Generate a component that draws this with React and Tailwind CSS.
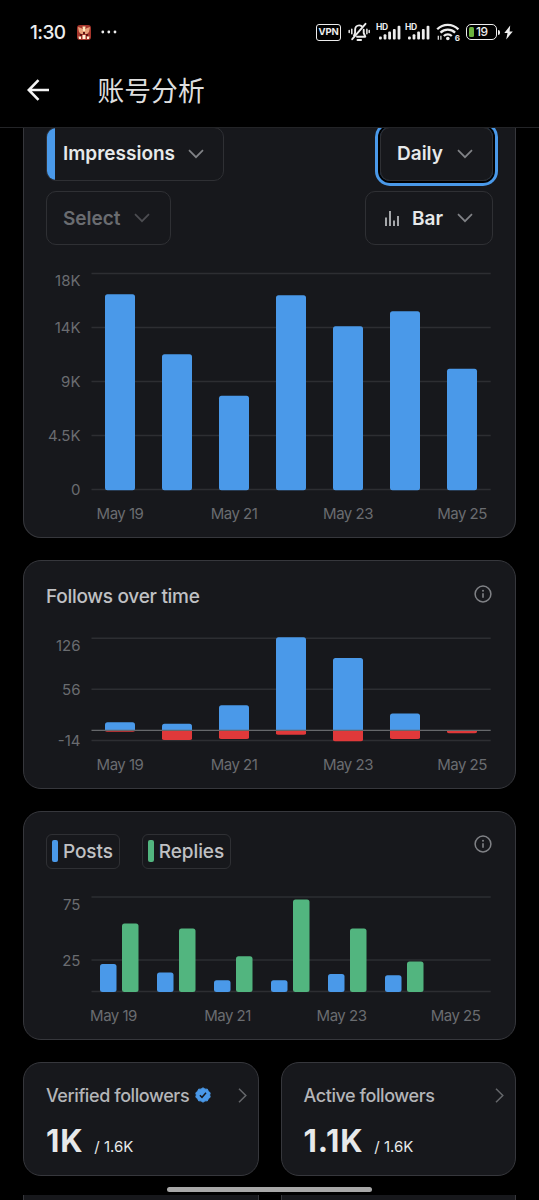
import React from "react";

const DAYS = ["May 19", "May 21", "May 23", "May 25"];

const impressions = [196, 136, 94.5, 195, 164, 179, 121.5];

const follows = [
    { up: 8, down: 1.5 },
    { up: 6.5, down: 9.7 },
    { up: 25, down: 8.8 },
    { up: 93, down: 4.5 },
    { up: 72.3, down: 11 },
    { up: 16.8, down: 8.8 },
    { up: 0, down: 3 },
];

const activity = [
    { posts: 28, replies: 68.5 },
    { posts: 19.5, replies: 63.5 },
    { posts: 11.8, replies: 35.8 },
    { posts: 11.8, replies: 92.5 },
    { posts: 18, replies: 63.5 },
    { posts: 16.8, replies: 30.5 },
];

function Chevron({ className = "" }) {
    return (
        <svg width="16" height="10" viewBox="0 0 16 10" fill="none" className={className}>
            <path d="M1 1.2l7 7 7-7" stroke="currentColor" strokeWidth="1.7" />
        </svg>
    );
}

function ChevronRight() {
    return (
        <svg width="9" height="15" viewBox="0 0 9 15" fill="none" className="text-[#65676b]">
            <path d="M1 .8l6.8 6.7L1 14.2" stroke="currentColor" strokeWidth="1.5" />
        </svg>
    );
}

function InfoIcon() {
    return (
        <svg width="18" height="18" viewBox="0 0 18 18" fill="none" className="text-[#808286]">
            <circle cx="9" cy="9" r="7.9" stroke="currentColor" strokeWidth="1.5" />
            <path d="M9 8.2v4.6" stroke="currentColor" strokeWidth="1.6" />
            <circle cx="9" cy="5.7" r="1" fill="currentColor" />
        </svg>
    );
}

function Grid({ lines }) {
    return lines.map((y) => (
        <line key={y} x1="45.5" x2="444.7" y1={y} y2={y} stroke="#2d2e32" strokeWidth="1.4" />
    ));
}

function YLabels({ items }) {
    return items.map(([text, y]) => (
        <text key={text} x="34.5" y={y} textAnchor="end">
            {text}
        </text>
    ));
}

function XLabels({ start, y }) {
    return DAYS.map((day, i) => (
        <text key={day} x={start + i * 114} y={y} textAnchor="middle" className="tracking-[-0.5px]">
            {day}
        </text>
    ));
}

function Chart({ height, children }) {
    return (
        <svg
            width="447"
            height={height}
            viewBox={`0 0 447 ${height}`}
            className="block fill-[#6a6c70] text-[15px]"
        >
            {children}
        </svg>
    );
}

function Signal() {
    return (
        <div className="relative h-[18px] w-[25px]">
            <span className="absolute top-0 left-0 text-[8.5px] leading-[8px] font-bold tracking-[-0.4px]">HD</span>
            <svg width="25" height="18" viewBox="0 0 25 18" fill="currentColor">
                <rect x="3" y="13.5" width="2.8" height="3" rx="1" />
                <rect x="7.6" y="11.2" width="2.8" height="5.3" rx="1" />
                <rect x="12.2" y="8.5" width="2.8" height="8" rx="1" />
                <rect x="16.9" y="6" width="2.8" height="10.5" rx="1" />
                <rect x="21.6" y="2.8" width="2.8" height="13.7" rx="1" />
            </svg>
        </div>
    );
}

function StatusBar() {
    return (
        <div className="flex h-[64px] items-center pl-[30px] text-[#ededed]">
            <span className="mt-[2px] w-[47px] text-[19px] font-medium tracking-[-0.6px]">1:30</span>
            <svg width="14" height="15" viewBox="0 0 14 15">
                <rect width="14" height="15" rx="3" fill="#a5352b" />
                <path d="M1 2l3 1 3 2 3-2 3-1-1 5-2 2H4L2 7z" fill="#e8a27b" />
                <path d="M5.5 1.5h3L8 6H6z" fill="#ffe9bd" />
                <path d="M3 9h2v2H3zM9 9h2v2H9zM6 7h2v2H6z" fill="#5c1513" />
                <path d="M1.5 11.5h2.5V14H2zM5.5 10h3v4h-3zM10 11.5h2.5L12 14h-2z" fill="#fff0d4" />
            </svg>
            <svg width="16" height="4" viewBox="0 0 16 4" fill="currentColor" className="ml-[10px]">
                <circle cx="1.8" cy="2" r="1.4" />
                <circle cx="7.8" cy="2" r="1.4" />
                <circle cx="14" cy="2" r="1.4" />
            </svg>
            <div className="ml-[199px] flex h-[17px] w-[25px] items-center justify-center rounded-[3px] border-[1.5px] border-current text-[9.5px] font-bold tracking-[-0.2px]">
                VPN
            </div>
            <svg width="22" height="20" viewBox="0 0 22 20" fill="none" stroke="currentColor" strokeWidth="1.9" strokeLinecap="round" strokeLinejoin="round" className="ml-[7px]">
                <path d="M6 13.5l1.1-2.6V8c0-2.7 1.6-4.6 4-4.6 1.2 0 2 .3 2.7.9M15.7 7.8V11l1.6 3.7H9" />
                <path d="M4.2 17.2L17.5 1.8M9.5 18h3.6" />
                <path d="M3.8 7.2v4.6M1.2 8.5v2M18.9 7.2v4.6M21.2 8.5v2" strokeWidth="1.5" />
            </svg>
            <div className="ml-[6px]">
                <Signal />
            </div>
            <div className="ml-[4px]">
                <Signal />
            </div>
            <div className="relative ml-[6px] h-[18px] w-[24px]">
                <svg width="24" height="18" viewBox="0 0 24 18" fill="none" stroke="currentColor" strokeWidth="2.3">
                    <path d="M1.2 6.3C7.2.4 16.2.4 22.4 6.3" />
                    <path d="M4.5 9.7c4.2-4 10.4-4 14.6 0" />
                    <path d="M7.8 13c2.3-2.1 5.7-2.1 8 0" />
                    <circle cx="11.8" cy="15.5" r="1.8" fill="currentColor" stroke="none" />
                    <path d="M2.3 12.8v4M4.9 12.8v4" strokeWidth="1.2" />
                </svg>
                <span className="absolute right-0 -bottom-px text-[8px] leading-[8px] font-bold">6</span>
            </div>
            <div className="ml-[6px] flex h-[16px] w-[31px] items-center rounded-[5px] border-[1.5px] border-current p-[2px]">
                <span className="h-[10px] w-[5px] rounded-[1.5px] bg-[#6cb33e]" />
                <span className="ml-[2px] text-[12px] leading-[10px] font-medium tracking-[-0.4px]">19</span>
            </div>
            <span className="ml-px h-[5px] w-[2px] rounded-r bg-current" />
            <svg width="9" height="15" viewBox="0 0 9 15" fill="currentColor" className="ml-[4px]">
                <path d="M6.2.5L.3 8h3.2L2.2 14.500 8.800 6.500H5.600z" />
            </svg>
        </div>
    );
}

function Header() {
    return (
        <header className="h-[128px] border-b border-[#232427]">
            <StatusBar />
            <div className="flex h-[52px] items-center pl-[27px]">
                <svg width="23" height="22" viewBox="0 0 23 22" fill="none" stroke="#f4f4f4" strokeWidth="2.6">
                    <path d="M11.5 1.2L1.8 11l9.7 9.8M2 11h20" />
                </svg>
                <h1 className="ml-[47.5px] font-['Noto_Sans_CJK_SC',sans-serif] text-[26.8px] leading-[36px] text-[#dedede]">
                    账号分析
                </h1>
            </div>
        </header>
    );
}

function ImpressionsCard() {
    return (
        <section className="h-[410px] overflow-hidden rounded-b-[18px] border border-t-0 border-[#36373c] bg-[#17181c] px-[22px]">
            <div className="-mt-px flex justify-between text-[19px] font-semibold text-[#e7e9ea]">
                <button className="flex h-[54px] w-[178px] items-center overflow-hidden rounded-[10px] border border-[#2f3034]">
                    <span className="h-full w-[8px] bg-[#4a99e9]" />
                    <span className="ml-[8px] w-[125px] text-left">Impressions</span>
                    <Chevron className="text-[#808286]" />
                </button>
                <button className="flex h-[54px] w-[113px] items-center rounded-[10px] border border-[#2f3034] pl-[16px] shadow-[0_0_0_2px_#000,0_0_0_5px_#4a99e9]">
                    <span className="w-[60px] text-left">Daily</span>
                    <Chevron className="text-[#808286]" />
                </button>
            </div>
            <div className="mt-[10px] flex justify-between text-[19px] font-semibold text-[#e7e9ea]">
                <button className="flex h-[54px] w-[125px] items-center rounded-[10px] border border-[#2f3034] pl-[16px] text-[#6a6c70]">
                    <span className="mt-[2px] w-[71px] text-left">Select</span>
                    <Chevron className="text-[#4c4d51]" />
                </button>
                <button className="flex h-[54px] w-[128px] items-center rounded-[10px] border border-[#2f3034] pl-[19px]">
                    <svg width="14" height="15" viewBox="0 0 14 15" stroke="#d5d6d8" strokeWidth="1.5">
                        <path d="M1 6.5V15M5 0v15M9 9.5V15M13 5v10" />
                    </svg>
                    <span className="mt-[2px] ml-[13px] w-[45px] text-left">Bar</span>
                    <Chevron className="text-[#808286]" />
                </button>
            </div>
            <div className="mt-[20px]">
                <Chart height={260}>
                    <Grid lines={[8.5, 62.5, 116.5, 170.5, 224.5]} />
                    {impressions.map((h, i) => (
                        <rect key={i} x={59 + i * 57} y={225.3 - h} width="30" height={h} rx="2.5" fill="#4a99e9" />
                    ))}
                    <YLabels items={[["18K", 21], ["14K", 68], ["9K", 122], ["4.5K", 176], ["0", 230]]} />
                    <XLabels start={74} y={254} />
                </Chart>
            </div>
        </section>
    );
}

function FollowsCard() {
    return (
        <section className="h-[229px] rounded-[18px] border border-[#36373c] bg-[#17181c] px-[22px]">
            <div className="flex h-[70px] items-center justify-between pr-px">
                <h2 className="mt-[2px] text-[19px] font-medium tracking-[-0.28px] text-[#c0c1c4]">Follows over time</h2>
                <div className="-mt-[5px]">
                    <InfoIcon />
                </div>
            </div>
            <Chart height={150}>
                <Grid lines={[7.2, 58.2, 109.5]} />
                {follows.map(({ up, down }, i) => (
                    <g key={i}>
                        <path
                            d={up ? `M${59 + i * 57} 99.3v${2.5 - up}q0-2.5 2.5-2.5h25q2.5 0 2.5 2.5v${up - 2.5}z` : ""}
                            fill="#4a99e9"
                        />
                        <path
                            d={`M${59 + i * 57} 99.3v${down - 1.5}q0 1.5 2.5 1.5h25q2.5 0 2.5-1.5v${1.5 - down}z`}
                            fill="#e0393a"
                        />
                    </g>
                ))}
                <line x1="45.5" x2="444.7" y1="99.3" y2="99.3" stroke="#66686b" strokeWidth="1.2" />
                <YLabels items={[["126", 20], ["56", 64], ["-14", 115]]} />
                <XLabels start={74} y={139} />
            </Chart>
        </section>
    );
}

function Legend({ color, children }) {
    return (
        <div className="flex h-[35px] items-center rounded-[6px] border border-[#2f3034] pr-[6px] pl-[5px]">
            <span className={`h-[22px] w-[6px] rounded-[2px] ${color}`} />
            <span className="mt-[2px] ml-[5px] text-[19px] font-medium tracking-[-0.1px] text-[#c0c1c4]">{children}</span>
        </div>
    );
}

function ActivityCard() {
    return (
        <section className="h-[229px] rounded-[18px] border border-[#36373c] bg-[#17181c] px-[22px]">
            <div className="flex h-[78px] items-center justify-between pr-px">
                <div className="flex gap-[22px]">
                    <Legend color="bg-[#4a99e9]">Posts</Legend>
                    <Legend color="bg-[#52b57f]">Replies</Legend>
                </div>
                <div className="-mt-[14px]">
                    <InfoIcon />
                </div>
            </div>
            <Chart height={145}>
                <Grid lines={[7, 70, 101.5]} />
                {activity.map(({ posts, replies }, i) => (
                    <g key={i}>
                        <rect x={54 + i * 57} y={102 - posts} width="16.5" height={posts} rx="2.5" fill="#4a99e9" />
                        <rect x={76 + i * 57} y={102 - replies} width="16.5" height={replies} rx="2.5" fill="#52b57f" />
                    </g>
                ))}
                <YLabels items={[["75", 19.5], ["25", 76]]} />
                <XLabels start={67.5} y={131} />
            </Chart>
        </section>
    );
}

function StatCard({ title, value, total, verified }) {
    return (
        <section className="h-[114px] rounded-[18px] border border-[#36373c] bg-[#17181c] pr-[11px] pl-[22px]">
            <div className="mt-[20px] flex h-[24px] items-center justify-between">
                <div className="flex items-center gap-[6px]">
                    <h2 className="text-[18px] font-medium tracking-[-0.42px] whitespace-nowrap text-[#b4b5b8]">{title}</h2>
                    {verified && (
                        <svg width="16" height="16" viewBox="0 0 24 24">
                            <path
                                fill="#4a99e9"
                                d="M12 1.2l3 2 3.600.1 1.400 3.200 2.800 2.200L22 12l.8 3.300-2.800 2.200-1.400 3.200-3.600.1-3 2-3-2-3.600-.1L4 17.500l-2.800-2.200L2 12l-.8-3.300L4 6.500l1.400-3.200 3.600-.1z"
                                stroke="#4a99e9"
                                strokeWidth="1.5"
                                strokeLinejoin="round"
                            />
                            <path d="M7.3 12.3l3.2 3.2 6-6.8" fill="none" stroke="#17181c" strokeWidth="2.2" />
                        </svg>
                    )}
                </div>
                <ChevronRight />
            </div>
            <div className="mt-[12px] flex items-baseline text-[#e7e9ea]">
                <span className="text-[31px] leading-[44px] font-bold tracking-[0.8px]">{value}</span>
                <span className="ml-[11px] text-[15px]">{total}</span>
            </div>
        </section>
    );
}

function App() {
    return (
        <div className="relative h-[1200px] w-[539px] overflow-hidden bg-black font-['Inter',sans-serif]">
            <Header />
            <main className="flex flex-col gap-[22px] px-[23px]">
                <ImpressionsCard />
                <FollowsCard />
                <ActivityCard />
                <div className="grid grid-cols-2 gap-x-[22px] gap-y-[19px]">
                    <StatCard title="Verified followers" value="1K" total="/ 1.6K" verified />
                    <StatCard title="Active followers" value="1.1K" total="/ 1.6K" />
                    <div className="h-[20px] border-x border-[#36373c] bg-[#17181c]" />
                    <div className="h-[20px] border-x border-[#36373c] bg-[#17181c]" />
                </div>
            </main>
            <div className="absolute bottom-[8px] left-[167px] h-[5px] w-[205px] rounded-full bg-[#a8a8a8]" />
        </div>
    );
}

export default App;
